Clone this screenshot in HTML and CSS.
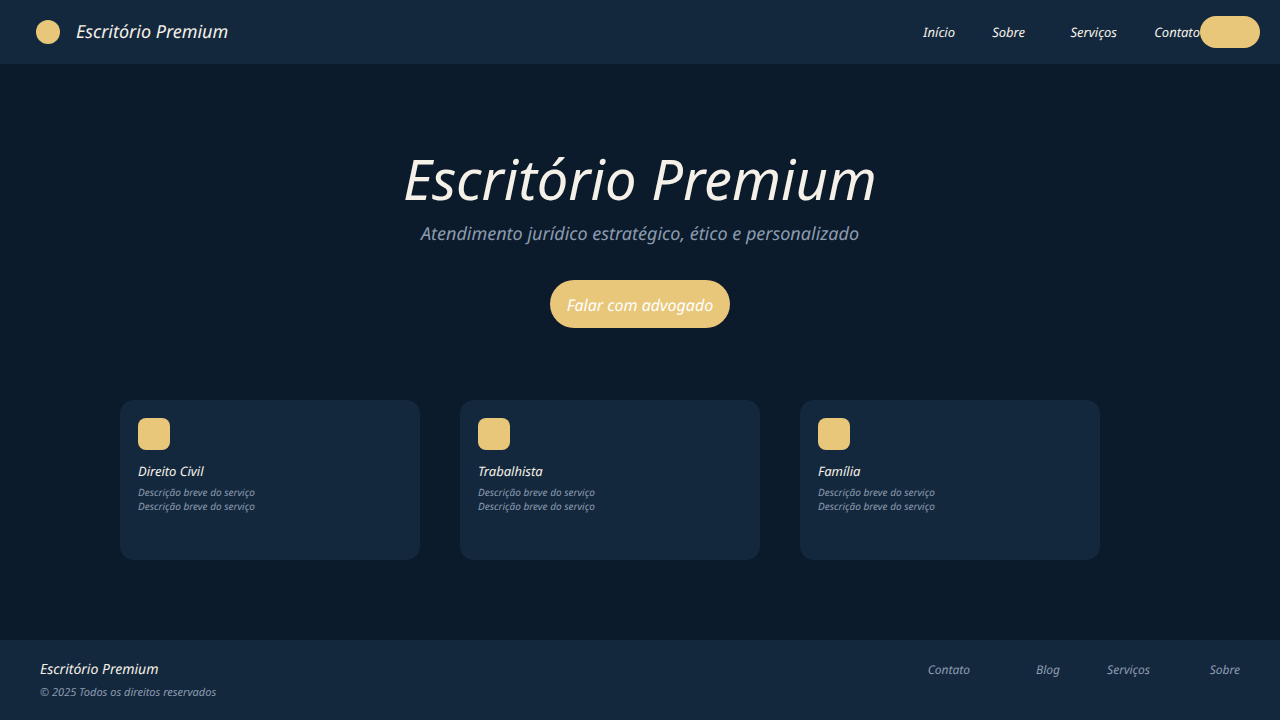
FILE: index.html
```html
<!DOCTYPE html>
<html lang="pt-br">
<head>
    <meta charset="UTF-8">
    <meta name="viewport" content="width=device-width, initial-scale=1.0">
    <title>Escritório Premium</title>
    <link rel="stylesheet" href="styles.css">
</head>
<body>
    <header class="topo">
        <a href="#" class="marca">
            <span class="logo"></span>
            Escritório Premium
        </a>
        <nav class="menu">
            <a href="#inicio">Início</a>
            <a href="#sobre">Sobre</a>
            <a href="#servicos">Serviços</a>
            <a href="#contato">Contato</a>
        </nav>
        <button type="button" class="botao-topo" aria-label="Contato"></button>
    </header>

    <main>
        <section class="hero" id="inicio">
            <h1>Escritório Premium</h1>
            <p>Atendimento jurídico estratégico, ético e personalizado</p>
            <button type="button" class="botao">Falar com advogado</button>
        </section>

        <section class="servicos" id="servicos">
            <article class="card">
                <div class="icone"></div>
                <h2>Direito Civil</h2>
                <p>Descrição breve do serviço<br>Descrição breve do serviço</p>
            </article>
            <article class="card">
                <div class="icone"></div>
                <h2>Trabalhista</h2>
                <p>Descrição breve do serviço<br>Descrição breve do serviço</p>
            </article>
            <article class="card">
                <div class="icone"></div>
                <h2>Família</h2>
                <p>Descrição breve do serviço<br>Descrição breve do serviço</p>
            </article>
        </section>
    </main>

    <footer class="rodape" id="contato">
        <div>
            <div class="rodape-nome">Escritório Premium</div>
            <div class="direitos">© 2025 Todos os direitos reservados</div>
        </div>
        <nav class="rodape-links">
            <a href="#contato">Contato</a>
            <a href="#blog">Blog</a>
            <a href="#servicos">Serviços</a>
            <a href="#sobre">Sobre</a>
        </nav>
    </footer>
</body>
</html>
```

FILE: styles.css
```css
* {
    box-sizing: border-box;
}

body {
    margin: 0;
    min-height: 100vh;
    display: flex;
    flex-direction: column;
    font-family: 'Noto Sans', sans-serif;
    font-style: italic;
    text-rendering: geometricPrecision;
    background-color: #0b1b2b;
    color: #f5f1e8;
}

h1, h2, p {
    margin: 0;
    font-weight: normal;
}

a {
    color: inherit;
    text-decoration: none;
}

button {
    border: none;
    font: inherit;
    text-rendering: inherit;
    background-color: #e8c77a;
    color: #ffffff;
    cursor: pointer;
}

main {
    flex: 1;
}

/* Topo */
.topo {
    display: flex;
    align-items: center;
    padding: 16px 20px 16px 36px;
    background-color: #14283d;
}

.marca {
    display: flex;
    align-items: center;
    gap: 16px;
    margin-right: auto;
    font-size: 18px;
    line-height: 24px;
}

.logo {
    width: 24px;
    height: 24px;
    border-radius: 50%;
    background-color: #e8c77a;
}

.menu {
    display: grid;
    grid-template-columns: auto 70px 92px 83px;
    text-align: right;
    font-size: 13px;
    line-height: 18px;
}

.botao-topo {
    width: 60px;
    height: 32px;
    border-radius: 16px;
}

/* Hero */
.hero {
    display: flex;
    flex-direction: column;
    align-items: center;
    padding-top: 80px;
    text-align: center;
}

.hero h1 {
    font-size: 56px;
    line-height: 70px;
}

.hero p {
    margin: 6px 0 32px;
    font-size: 18px;
    line-height: 28px;
    color: #8c9bb0;
}

.botao {
    width: 180px;
    height: 48px;
    padding: 2px 0 0;
    border-radius: 24px;
    font-size: 16px;
}

/* Cards */
.servicos {
    display: grid;
    grid-template-columns: repeat(3, 1fr);
    gap: 40px;
    padding: 72px 180px 80px 120px;
}

.card {
    min-height: 160px;
    padding: 18px;
    border-radius: 14px;
    background-color: #14283d;
}

.icone {
    width: 32px;
    height: 32px;
    margin-bottom: 12px;
    border-radius: 8px;
    background-color: #e8c77a;
}

.card h2 {
    margin-bottom: 5px;
    font-size: 13px;
    line-height: 18px;
}

.card p {
    font-size: 10px;
    line-height: 14px;
    color: #8c9bb0;
}

/* Rodapé */
.rodape {
    display: flex;
    justify-content: space-between;
    align-items: flex-start;
    min-height: 80px;
    padding: 20px 40px;
    background-color: #14283d;
}

.rodape-nome {
    margin-bottom: 4px;
    font-size: 14px;
    line-height: 20px;
}

.direitos {
    font-size: 11px;
    line-height: 18px;
    color: #8c9bb0;
}

.rodape-links {
    display: grid;
    grid-template-columns: auto repeat(3, 90px);
    text-align: right;
    font-size: 12px;
    line-height: 20px;
    color: #8c9bb0;
}

@media (max-width: 900px) {
    .servicos {
        grid-template-columns: 1fr;
        padding: 72px 36px;
    }
}
```
